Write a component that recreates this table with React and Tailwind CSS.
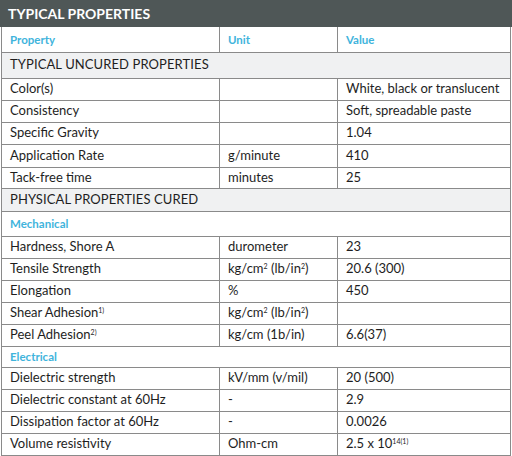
import React from "react";

const cell = "border-r border-[#8a8a8a] px-2 align-middle";

const Sup = ({ children }) => (
  <span className="text-[7px] relative -top-[4px] leading-none">{children}</span>
);

const rowsUncured = [
  ["Color(s)", "", "White, black or translucent", "h-[22px]"],
  ["Consistency", "", "Soft, spreadable paste", "h-[22px]"],
  ["Specific Gravity", "", "1.04", "h-[22px]"],
  ["Application Rate", "g/minute", "410", "h-[23px]"],
  ["Tack-free time", "minutes", "25", "h-[21px]"],
];

const kgcm = (
  <>
    kg/cm<Sup>2</Sup> (lb/in<Sup>2</Sup>)
  </>
);

const rowsMech = [
  ["Hardness, Shore A", "durometer", "23"],
  ["Tensile Strength", kgcm, "20.6 (300)"],
  ["Elongation", "%", "450"],
  [<>Shear Adhesion<Sup>1)</Sup></>, kgcm, ""],
  [<>Peel Adhesion<Sup>2)</Sup></>, "kg/cm (1b/in)", "6.6(37)"],
];

const rowsElec = [
  ["Dielectric strength", "kV/mm (v/mil)", "20 (500)"],
  ["Dielectric constant at 60Hz", "-", "2.9"],
  ["Dissipation factor at 60Hz", "-", "0.0026"],
  ["Volume resistivity", "Ohm-cm", <>2.5 x 10<Sup>14(1)</Sup></>],
];

const DataRow = ({ r, h = "h-[22px]" }) => (
  <tr className={`${h} border-b border-[#8a8a8a]`}>
    <td className={cell}>{r[0]}</td>
    <td className={cell}>{r[1]}</td>
    <td className="px-2 align-middle">{r[2]}</td>
  </tr>
);

const Section = ({ label, h }) => (
  <tr className={`${h} border-b border-[#8a8a8a] bg-[#f0f1f2]`}>
    <td colSpan={3} className="px-2 text-[13px] tracking-[0.1px] align-middle">{label}</td>
  </tr>
);

const Group = ({ label, h }) => (
  <tr className={`${h} border-b border-[#8a8a8a]`}>
    <td colSpan={3} className="px-2 text-[11.5px] font-bold text-[#3fb4dc] align-middle">{label}</td>
  </tr>
);

export default function App() {
  return (
    <div className="w-[512px] h-[456px] bg-white" style={{ fontFamily: "Lato, 'Open Sans', sans-serif" }}>
      <div className="h-[27px] bg-[#4f5757] text-white font-bold text-[14px] px-2 flex items-center">
        TYPICAL PROPERTIES
      </div>
      <table className="w-[510px] ml-[1px] border-collapse border-l border-r border-[#8a8a8a] text-[13px] text-[#1e1e1e] table-fixed">
        <colgroup>
          <col className="w-[218px]" />
          <col className="w-[118px]" />
          <col />
        </colgroup>
        <tbody>
          <tr className="h-[25px] border-b border-[#8a8a8a] text-[11.5px] font-bold text-[#3fb4dc]">
            <td className={cell}>Property</td>
            <td className={cell}>Unit</td>
            <td className="px-2">Value</td>
          </tr>
          <Section label="TYPICAL UNCURED PROPERTIES" h="h-[26px]" />
          {rowsUncured.map((r, i) => (
            <DataRow key={i} r={r} h={r[3]} />
          ))}
          <Section label="PHYSICAL PROPERTIES CURED" h="h-[23px]" />
          <Group label="Mechanical" h="h-[25px]" />
          {rowsMech.map((r, i) => (
            <DataRow key={i} r={r} />
          ))}
          <Group label="Electrical" h="h-[21px]" />
          {rowsElec.map((r, i) => (
            <DataRow key={i} r={r} />
          ))}
        </tbody>
      </table>
    </div>
  );
}
